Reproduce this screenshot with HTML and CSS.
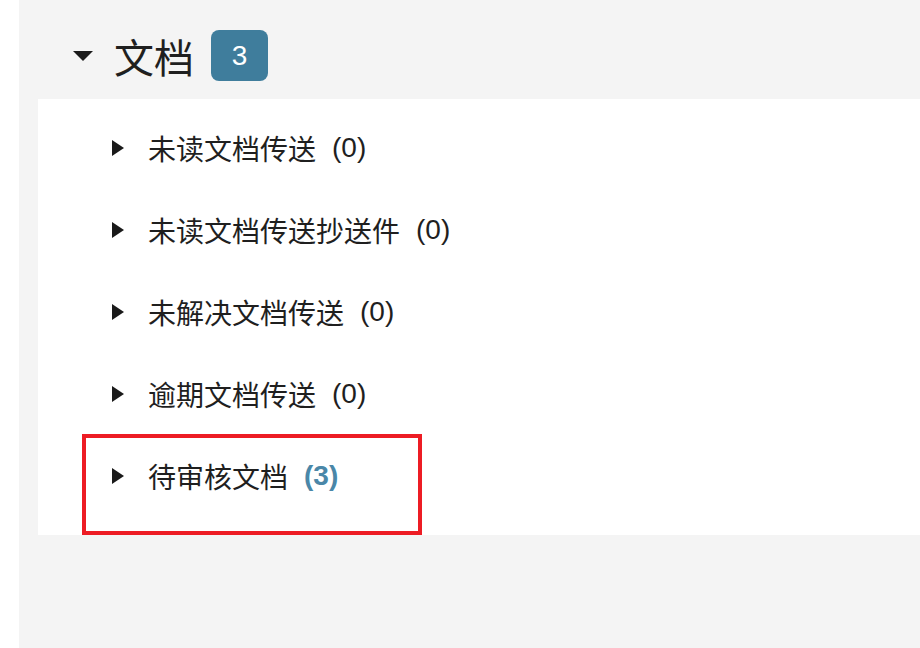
FILE: index.html
```html
<!DOCTYPE html>
<html lang="zh-CN">
<head>
<meta charset="utf-8">
<title>文档</title>
<link rel="stylesheet" href="styles.css">
</head>
<body>
<div class="page">
  <div class="section">
    <div class="section-head">
      <span class="caret-down"></span>
      <span class="section-title">文档</span>
      <span class="badge">3</span>
    </div>
    <ul class="items">
      <li class="item"><span class="caret-right"></span><span class="label">未读文档传送</span><span class="count">(0)</span></li>
      <li class="item"><span class="caret-right"></span><span class="label">未读文档传送抄送件</span><span class="count">(0)</span></li>
      <li class="item"><span class="caret-right"></span><span class="label">未解决文档传送</span><span class="count">(0)</span></li>
      <li class="item"><span class="caret-right"></span><span class="label">逾期文档传送</span><span class="count">(0)</span></li>
      <li class="item"><span class="caret-right"></span><span class="label">待审核文档</span><span class="count count-active">(3)</span></li>
      <div class="highlight"></div>
    </ul>
  </div>
</div>
</body>
</html>
```

FILE: styles.css
```css
html, body {
  margin: 0;
  padding: 0;
  background: #ffffff;
}
body {
  font-family: "Liberation Sans", "Noto Sans CJK SC", sans-serif;
  color: #1f1f1f;
}
.page {
  margin-left: 19px;
  height: 648px;
  background: #f4f4f4;
}
.section-head {
  box-sizing: border-box;
  height: 99px;
  padding: 12px 0 0 54px;
  display: flex;
  align-items: center;
}
.caret-down {
  width: 0;
  height: 0;
  border-left: 10px solid transparent;
  border-right: 10px solid transparent;
  border-top: 10px solid #1a1a1a;
  margin-right: 21px;
}
.section-title {
  font-family: "Noto Sans CJK SC", sans-serif;
  font-size: 40px;
  line-height: 1;
  color: #1f1f1f;
}
.badge {
  margin-left: 17px;
  width: 57px;
  height: 51px;
  border-radius: 8px;
  background: #3f7d9c;
  color: #ffffff;
  font-size: 28px;
  display: flex;
  align-items: center;
  justify-content: center;
}
.items {
  position: relative;
  list-style: none;
  margin: 0 0 0 19px;
  padding: 8px 0 18px 74px;
  background: #ffffff;
}
.item {
  height: 82px;
  display: flex;
  align-items: center;
  font-size: 28px;
}
.caret-right {
  width: 0;
  height: 0;
  border-top: 8px solid transparent;
  border-bottom: 8px solid transparent;
  border-left: 12px solid #1a1a1a;
  margin-right: 24px;
}
.label {
  font-family: "Noto Sans CJK SC", sans-serif;
}
.count {
  margin-left: 16px;
  font-size: 28px;
}
.count-active {
  font-weight: bold;
  color: #4a87a8;
}
.highlight {
  position: absolute;
  left: 44px;
  top: 335px;
  width: 340px;
  height: 101px;
  box-sizing: border-box;
  border: 4px solid #ed1c24;
}
```
